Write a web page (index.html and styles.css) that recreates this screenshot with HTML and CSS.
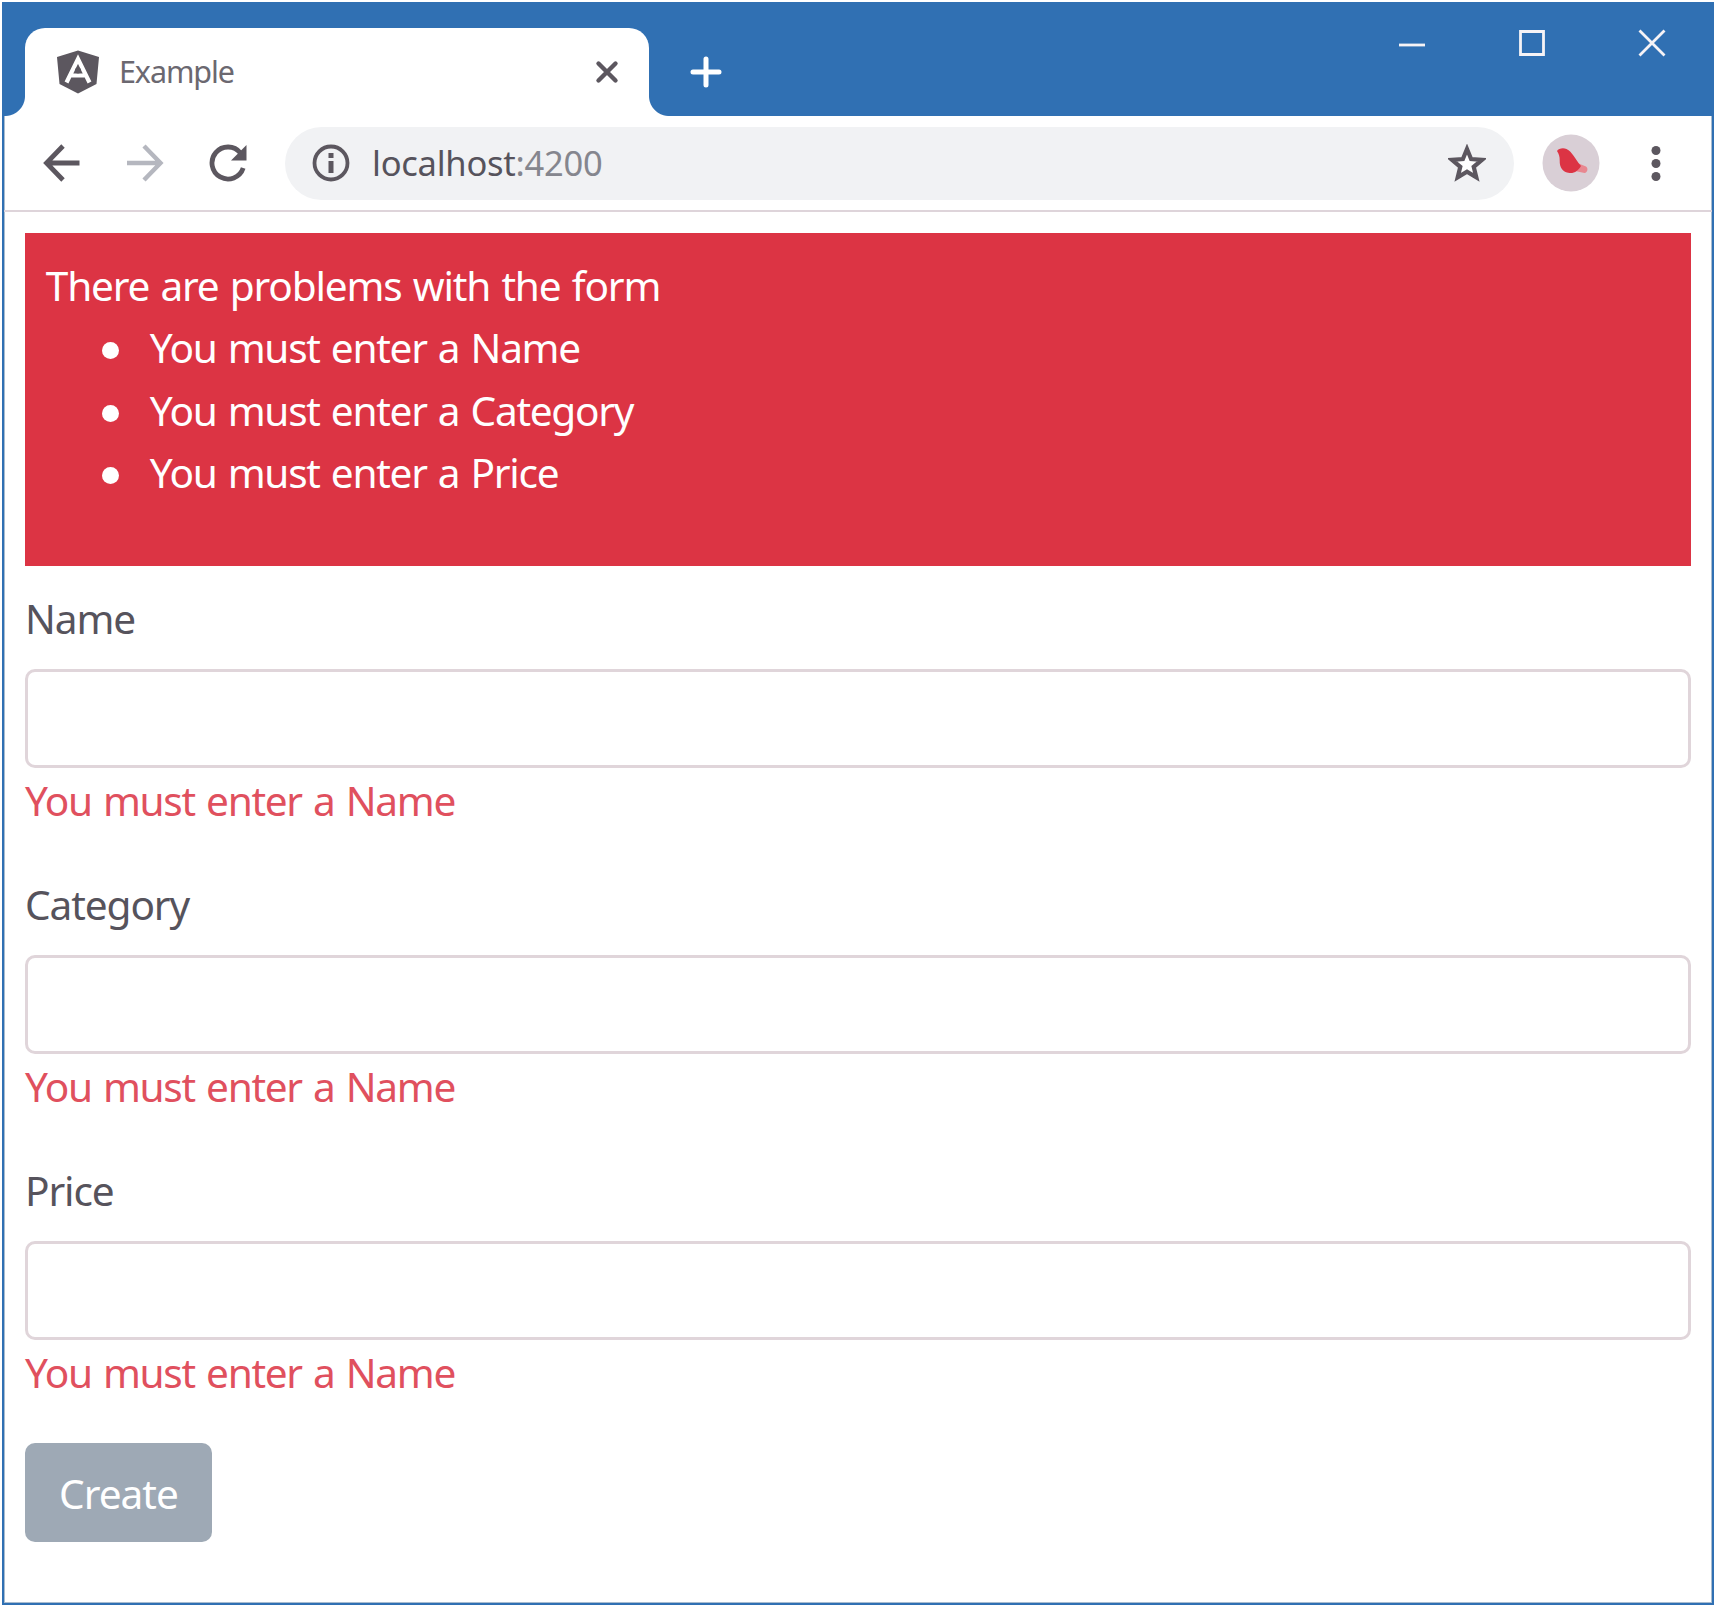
FILE: index.html
```html
<!DOCTYPE html>
<html lang="en">
<head>
<meta charset="utf-8">
<title>Example</title>
<link rel="stylesheet" href="styles.css">
</head>
<body>
<div class="window">
  <header class="titlebar">
    <div class="tab">
      <svg class="tab-logo" width="44" height="44" viewBox="0 0 44 44"><path fill="#5c575f" d="M22 0.500 43 7l-2.500 27-18.500 9.500L3.500 34 1 7z"/><path fill="none" stroke="#fff" stroke-width="4.200" d="M10.500 32.500 22 9l11.500 23.500M15.500 25.500h13"/><circle cx="22" cy="20.500" r="3" fill="#5c575f"/></svg>
      <span class="tab-title">Example</span>
      <svg class="tab-close" width="24" height="24" viewBox="0 0 24 24"><path fill="none" stroke="#5c575f" stroke-width="4.400" stroke-linecap="round" d="M3.500 3.500l17 17M20.500 3.500l-17 17"/></svg>
    </div>
    <svg class="new-tab" width="32" height="32" viewBox="0 0 32 32"><path fill="none" stroke="#fff" stroke-width="5" stroke-linecap="round" d="M16 3v26M3 16h26"/></svg>
    <div class="controls">
      <svg width="28" height="28" viewBox="0 0 28 28"><path stroke="#f6f3f6" stroke-width="2.800" d="M1 16h26"/></svg>
      <svg width="28" height="28" viewBox="0 0 28 28"><path fill="none" stroke="#f6f3f6" stroke-width="2.800" d="M2.500 2.500h23v23h-23z"/></svg>
      <svg width="28" height="28" viewBox="0 0 28 28"><path stroke="#f6f3f6" stroke-width="2.800" d="M1.500 1.500l25 25M26.500 1.500l-25 25"/></svg>
    </div>
  </header>
  <nav class="toolbar">
    <svg class="back" width="38" height="38" viewBox="0 0 38 38"><path fill="none" stroke="#5c575f" stroke-width="4.800" d="M36.500 19H4M20 2 3.500 19 20 36"/></svg>
    <svg class="forward" width="38" height="38" viewBox="0 0 38 38"><path fill="none" stroke="#b5b7bf" stroke-width="4.400" d="M1 19h33M18 2l16.500 17L18 36"/></svg>
    <svg class="reload" width="38" height="38" viewBox="0 0 38 38"><path fill="none" stroke="#5c575f" stroke-width="4.800" d="M34.200 24A16 16 0 1 1 31.500 9"/><path fill="#5c575f" d="M37.500 1v15.500H22z"/></svg>
    <div class="address">
      <svg width="38" height="38" viewBox="0 0 38 38"><circle cx="19" cy="19" r="16.500" fill="none" stroke="#5c575f" stroke-width="3.800"/><path fill="#5c575f" d="M16.500 9h5v5h-5zM16.500 17h5v12h-5z"/></svg>
      <span class="url">localhost<span class="port">:4200</span></span>
      <svg class="star" width="38" height="38" viewBox="0 0 38 38"><path fill="#fff" stroke="#5c575f" stroke-width="4.200" d="M19 5l4.100 10 10.900.800-8.300 7 2.600 10.500L19 27.600l-9.300 5.700L12.300 22.800 4 15.800l10.900-.800z"/></svg>
    </div>
    <svg class="avatar" width="58" height="58" viewBox="0 0 58 58"><circle cx="29" cy="29" r="28.500" fill="#d9cfd6"/><path fill="#e88790" d="M33 28l11 4.500c2.500 2 1.500 6-1.500 6.500L33 37z"/><path fill="#dc3444" d="M15 17c1.500-2.500 6-3.500 9.500-2 6 3 8 9.500 14.500 17-2.500 4.500-6.500 7.500-11.500 7-7-.500-10-6-9.800-12.500.100-4-.700-6.500-2.700-9.500z"/></svg>
    <svg class="menu" width="10" height="38" viewBox="0 0 10 38"><g fill="#5c575f"><circle cx="5" cy="6.500" r="4.500"/><circle cx="5" cy="19.500" r="4.500"/><circle cx="5" cy="32.500" r="4.500"/></g></svg>
  </nav>
  <main class="page">
    <section class="alert">
      <div class="alert-title">There are problems with the form</div>
      <ul class="alert-list">
        <li>You must enter a Name</li>
        <li>You must enter a Category</li>
        <li>You must enter a Price</li>
      </ul>
    </section>
    <form class="form">
      <div class="group">
        <label for="name">Name</label>
        <input id="name" type="text">
        <div class="error">You must enter a Name</div>
      </div>
      <div class="group">
        <label for="category">Category</label>
        <input id="category" type="text">
        <div class="error">You must enter a Name</div>
      </div>
      <div class="group">
        <label for="price">Price</label>
        <input id="price" type="text">
        <div class="error">You must enter a Name</div>
      </div>
      <button class="create" type="button">Create</button>
    </form>
  </main>
</div>
</body>
</html>
```
FILE: styles.css
```css
* { box-sizing: border-box; }
body {
  margin: 0;
  padding: 2px;
  background: #fff;
  font-family: "Noto Sans", "Open Sans", sans-serif;
  font-size: 40.6px;
  line-height: 62.4px;
  letter-spacing: -1.3px;
  word-spacing: 2px;
  color: #56535c;
}
svg { display: block; flex: none; }
.window {
  width: 1712px;
  height: 1603px;
  border: 2px solid #3070b3;
  border-top: 0;
  background: #fff;
  box-shadow: inset 0 0 0 1px #a9bccf;
}
.titlebar {
  display: flex;
  align-items: flex-start;
  height: 114px;
  padding-left: 21px;
  background: #3070b3;
}
.tab {
  position: relative;
  display: flex;
  align-items: center;
  width: 624px;
  height: 88px;
  margin-top: 26px;
  padding: 0 30px 0 31px;
  border-radius: 20px 20px 0 0;
  background: #fff;
}
.tab::before, .tab::after {
  content: "";
  position: absolute;
  bottom: 0;
  width: 20px;
  height: 20px;
}
.tab::before { left: -20px; background: radial-gradient(circle at 0 0, #3070b3 19.500px, #fff 20.500px); }
.tab::after { right: -20px; background: radial-gradient(circle at 100% 0, #3070b3 19.500px, #fff 20.500px); }
.tab-title {
  margin: 0 0 2px 19px;
  font-size: 30.5px;
  letter-spacing: -1.1px;
  color: #6b6870;
}
.tab-close { margin-left: auto; }
.new-tab { margin: 54px 0 0 41px; }
.controls {
  display: flex;
  gap: 92px;
  margin: 27px 46px 0 auto;
}
.toolbar {
  display: flex;
  align-items: center;
  height: 96px;
  padding: 0 51px 0 39px;
  border-bottom: 2px solid #ded4da;
}
.forward { margin-left: 45px; }
.reload { margin-left: 45px; }
.address {
  display: flex;
  align-items: center;
  width: 1229px;
  height: 73px;
  margin-left: 38px;
  padding: 0 28px 0 27px;
  border-radius: 37px;
  background: #f1f2f4;
}
.url {
  margin-left: 22px;
  font-size: 34.5px;
  letter-spacing: -0.25px;
}
.port { color: #85868e; }
.star { margin-left: auto; }
.avatar { margin-left: 28px; }
.menu { margin-left: auto; }
.page { padding: 21px 21px 0; }
.alert {
  height: 332.500px;
  padding: 22px 20.800px 0;
  background: #dc3444;
  color: #fff;
}
.alert-title { letter-spacing: -1.2px; }
.alert-list {
  margin: 0;
  padding-left: 104px;
  list-style: none;
}
.alert-list li { position: relative; }
.alert-list li::before {
  content: "";
  position: absolute;
  left: -48px;
  top: 25px;
  width: 17px;
  height: 17px;
  border-radius: 50%;
  background: #fff;
}
.form { padding-top: 20.500px; }
.group { margin-bottom: 39.200px; }
label {
  display: block;
  margin-bottom: 18.800px;
  padding-top: 2px;
  letter-spacing: -1.1px;
}
input {
  display: block;
  width: 100%;
  height: 99px;
  border: 3px solid #e0d5da;
  border-radius: 10px;
  background: #fff;
}
.error {
  padding-top: 2px;
  color: #e0505e;
}
.create {
  width: 187px;
  height: 99px;
  padding: 2px 0 0;
  border: 0;
  border-radius: 10px;
  background: #9ea9b5;
  color: #fff;
  font: inherit;
  letter-spacing: -1px;
}
```
